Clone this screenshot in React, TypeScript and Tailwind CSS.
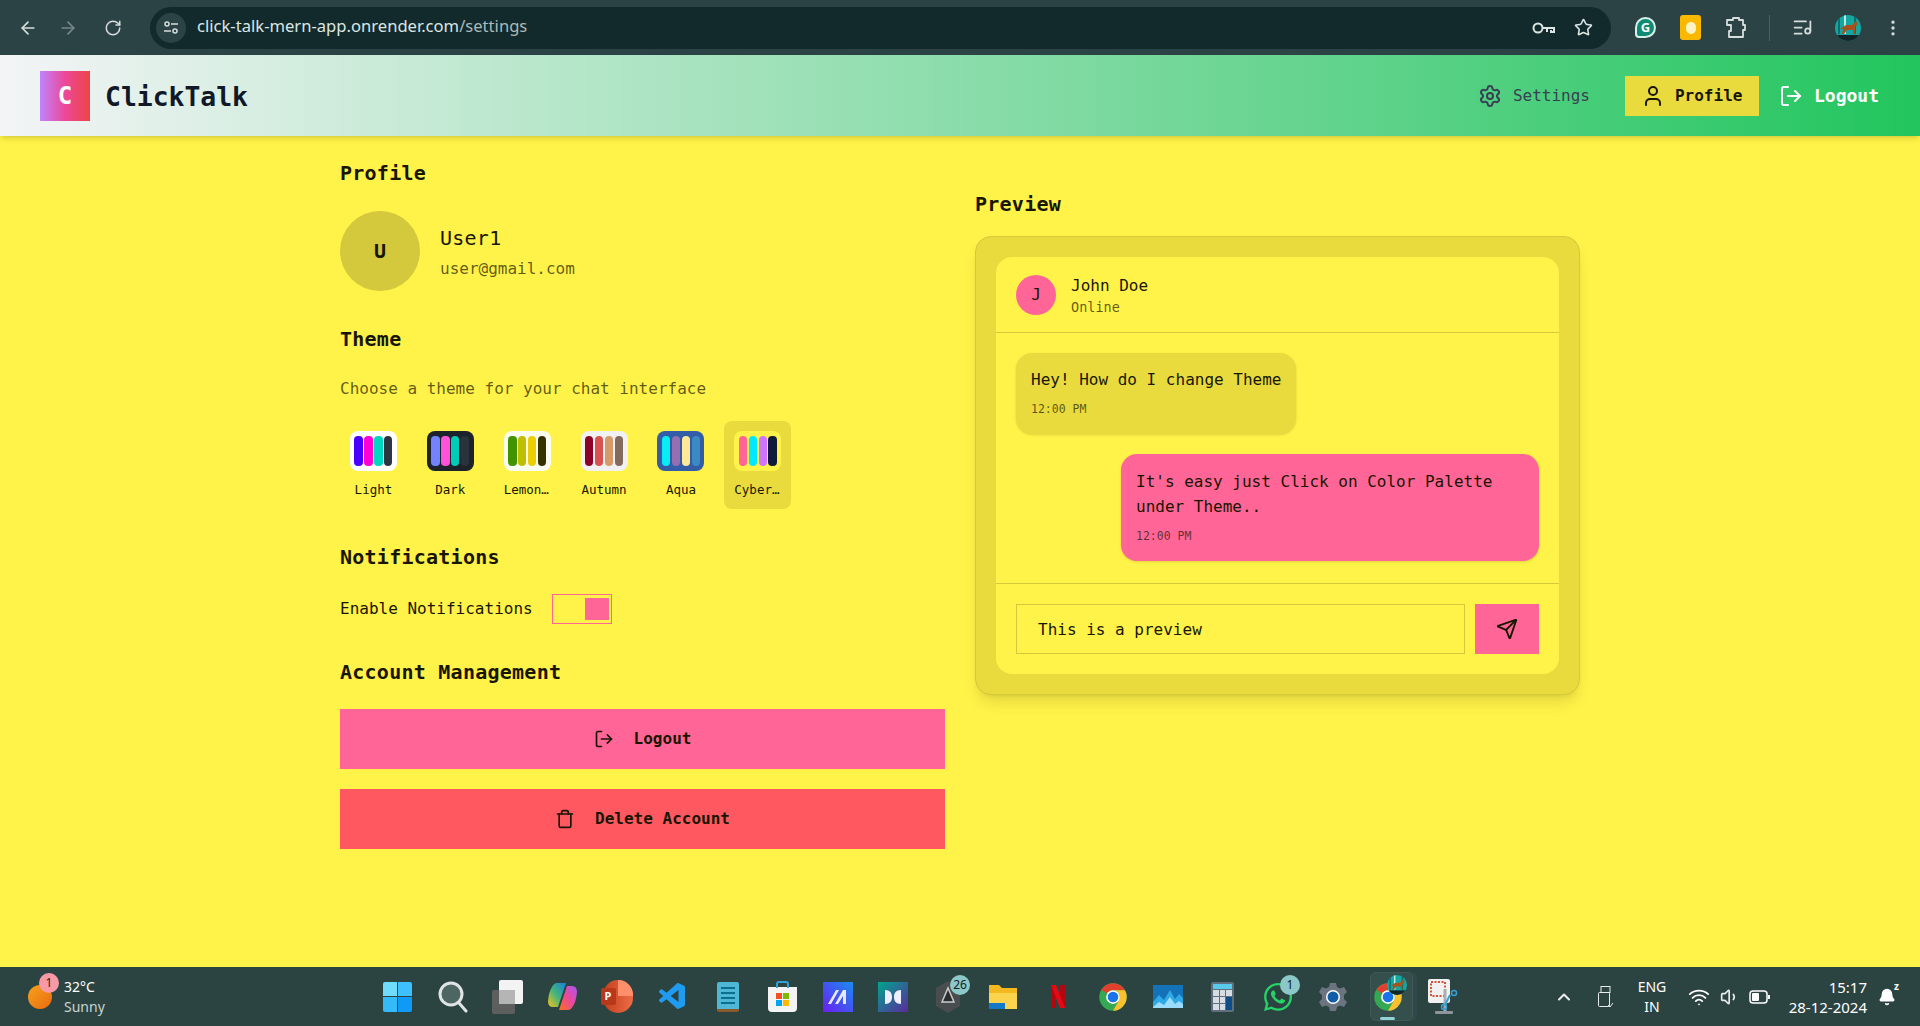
import React from "react";
import { ArrowLeft, ArrowRight, RotateCw, Star, ListMusic, MoreVertical, Settings, User, LogOut, Trash, Send, ChevronUp, Wifi, Volume1, Bell } from "lucide-react";
import { FaWhatsapp } from "react-icons/fa";
import { VscVscode } from "react-icons/vsc";

const mono = "font-['DejaVu_Sans_Mono','Liberation_Mono',monospace]";

const themes = [
  { name: "Light", bg: "bg-white", bars: ["bg-[#4a00ff]", "bg-[#ff00d3]", "bg-[#00d7c0]", "bg-[#2b3440]"] },
  { name: "Dark", bg: "bg-[#1d232a]", bars: ["bg-[#7582ff]", "bg-[#ff52d9]", "bg-[#00cdb7]", "bg-[#2a323c]"] },
  { name: "Lemonade", bg: "bg-[#f8fdef]", bars: ["bg-[#419400]", "bg-[#bfbf00]", "bg-[#ebcf00]", "bg-[#343300]"] },
  { name: "Autumn", bg: "bg-[#f1f1f1]", bars: ["bg-[#8c0327]", "bg-[#d85251]", "bg-[#d59b6a]", "bg-[#826a5c]"] },
  { name: "Aqua", bg: "bg-[#345da7]", bars: ["bg-[#09ecf3]", "bg-[#966fb3]", "bg-[#ffe999]", "bg-[#3b8ac4]"] },
  { name: "Cyberpunk", bg: "bg-[#fff248]", bars: ["bg-[#ff6596]", "bg-[#00e8ff]", "bg-[#ce74ff]", "bg-[#111a3b]"], active: true },
];

function ChromeLogo({ size = 30 }: { size?: number }) {
  return (
    <svg width={size} height={size} viewBox="0 0 48 48">
      <circle cx="24" cy="24" r="22" fill="#34a853" />
      <path d="M24 2A22 22 0 0 1 43 13H24A11 11 0 0 0 14.500 18.500L5.500 12.500A22 22 0 0 1 24 2Z" fill="#e2402f" />
      <path d="M43 13A22 22 0 0 1 24 46L33.500 29.500A11 11 0 0 0 24 13Z" fill="#fbc02d" />
      <circle cx="24" cy="24" r="11" fill="#fff" />
      <circle cx="24" cy="24" r="8.500" fill="#1a73e8" />
    </svg>
  );
}

function HorseAvatar({ size = 26 }: { size?: number }) {
  return (
    <svg width={size} height={size} viewBox="0 0 26 26">
      <defs>
        <clipPath id={`c${size}`}><circle cx="13" cy="13" r="13" /></clipPath>
      </defs>
      <g clipPath={`url(#c${size})`}>
        <rect width="26" height="26" fill="#14a6a0" />
        <rect x="3" width="2" height="19" fill="#0b6f72" />
        <rect x="9" width="2" height="19" fill="#bfe7e6" />
        <rect x="19" width="2" height="19" fill="#0b6f72" />
        <path d="M5 14l6-4 6 0 4-4 2 3-3 3v7h-2v-4l-6 0-3 4H7l1-5z" fill="#a5521f" />
        <rect y="20" width="26" height="6" fill="#12262a" />
      </g>
    </svg>
  );
}

function Gear({ size = 30 }: { size?: number }) {
  return (
    <svg width={size} height={size} viewBox="0 0 30 30">
      <path d="M12 1h6l1 4 3 1.500 4-1.500 3 5-3 3v4l3 3-3 5-4-1.500L19 25l-1 4h-6l-1-4-3-1.500L4 25l-3-5 3-3v-4L1 10l3-5 4 1.500L11 5z" fill="#6b7480" />
      <circle cx="15" cy="15" r="7" fill="#fff" />
      <circle cx="15" cy="15" r="5.500" fill="#0f5ca8" />
    </svg>
  );
}

function Slot({ children, badge, className = "" }: { children: React.ReactNode; badge?: string; className?: string }) {
  return (
    <div className={`relative flex h-full w-[55px] items-center justify-center ${className}`}>
      {children}
      {badge && (
        <span className="absolute left-[30px] top-[8px] flex h-[20px] w-[20px] items-center justify-center rounded-full bg-[#8cc8c8] font-['Noto_Sans',sans-serif] text-[12px] text-[#10201f]">
          {badge}
        </span>
      )}
    </div>
  );
}

function Taskbar() {
  return (
    <div className="flex h-[59px] shrink-0 items-center bg-[#2c4441] font-['Noto_Sans',sans-serif] text-white">
      <div className="flex w-[370px] items-center pl-[28px]">
        <div className="relative h-[24px] w-[24px] rounded-full bg-[linear-gradient(135deg,#f7a21b,#e96a12)]">
          <span className="absolute left-[11px] top-[-12px] flex h-[20px] w-[20px] items-center justify-center rounded-full bg-[#f79aa6] text-[12px] text-[#222]">1</span>
        </div>
        <div className="ml-[12px] text-[14px] leading-[20px]">
          <div>32°C</div>
          <div className="text-[#c9d2d0]">Sunny</div>
        </div>
      </div>
      <div className="flex h-full">
        <Slot>
          <div className="grid h-[30px] w-[29px] grid-cols-2 gap-[1px]">
            <div className="rounded-tl-[2px] bg-[#6fdcfb]" /><div className="rounded-tr-[2px] bg-[#3dc0fb]" />
            <div className="rounded-bl-[2px] bg-[#35baf8]" /><div className="rounded-br-[2px] bg-[#0f9bf5]" />
          </div>
        </Slot>
        <Slot>
          <svg width="30" height="36" viewBox="0 0 30 36" fill="none">
            <circle cx="13" cy="15" r="11" fill="#4e6663" stroke="#dfe5e4" strokeWidth="3" />
            <path d="M21 24l7 8" stroke="#dfe5e4" strokeWidth="3" strokeLinecap="round" />
          </svg>
        </Slot>
        <Slot>
          <svg width="31" height="34" viewBox="0 0 31 34">
            <rect y="10" width="23" height="24" rx="2" fill="#5d5f5f" />
            <rect x="7" y="0" width="24" height="24" rx="2" fill="#f3f3f3" />
            <rect x="7" y="10" width="16" height="14" fill="#b5b5b5" />
          </svg>
        </Slot>
        <Slot>
          <svg width="29" height="31" viewBox="0 0 29 31">
            <defs>
              <linearGradient id="cp1" x1="0" y1="1" x2="1" y2="0"><stop offset="0" stopColor="#f5c518" /><stop offset=".5" stopColor="#3fb37f" /><stop offset="1" stopColor="#1a7fe0" /></linearGradient>
              <linearGradient id="cp2" x1="0" y1="1" x2="1" y2="0"><stop offset="0" stopColor="#f97316" /><stop offset=".5" stopColor="#ec4899" /><stop offset="1" stopColor="#a855f7" /></linearGradient>
            </defs>
            <path d="M9 2h9l-8 24H5Q0 26 0 20Q1 10 4 6Q6 2 9 2Z" fill="url(#cp1)" />
            <path d="M20 29h-9l8-24h5q5 0 5 6q-1 10-4 14q-2 4-5 4Z" fill="url(#cp2)" />
          </svg>
        </Slot>
        <Slot>
          <div className="relative h-[33px] w-[30px] rounded-full bg-[linear-gradient(90deg,#c43e1c,#ed6c47)]">
            <div className="absolute right-0 top-0 h-[16px] w-[15px] rounded-tr-full bg-[#ff8f6b]" />
            <span className="absolute left-[-2px] top-[8px] flex h-[17px] w-[15px] items-center justify-center rounded-[2px] bg-[#b7381a] text-[11px] font-bold text-white">P</span>
          </div>
        </Slot>
        <Slot><VscVscode size={32} className="text-[#1f9cf0]" /></Slot>
        <Slot>
          <div className="flex h-[30px] w-[22px] flex-col justify-center gap-[3px] rounded-[2px] border-b-[3px] border-[#8a5a2b] bg-[#4fb7d6] px-[4px]">
            <div className="h-[2px] bg-[#0d6f8f]" /><div className="h-[2px] bg-[#0d6f8f]" /><div className="h-[2px] bg-[#0d6f8f]" /><div className="h-[2px] bg-[#0d6f8f]" />
          </div>
        </Slot>
        <Slot>
          <div className="relative h-[25px] w-[29px] translate-y-[3px] rounded-b-[4px] bg-[#f4f4f4]">
            <div className="absolute left-[8px] top-[-6px] h-[7px] w-[13px] rounded-t-[3px] border-2 border-b-0 border-[#35a0d8]" />
            <div className="absolute left-[8px] top-[6px] grid h-[13px] w-[13px] grid-cols-2 gap-[1px]">
              <div className="bg-[#f25022]" /><div className="bg-[#7fba00]" /><div className="bg-[#00a4ef]" /><div className="bg-[#ffb900]" />
            </div>
          </div>
        </Slot>
        <Slot>
          <svg width="30" height="30" viewBox="0 0 30 30">
            <defs><linearGradient id="ma" x1="0" y1="1" x2="1" y2="0"><stop offset="0" stopColor="#6a1ff2" /><stop offset="1" stopColor="#1a8cf0" /></linearGradient></defs>
            <rect width="30" height="30" fill="url(#ma)" />
            <path d="M5 22L13 8h3L8 22zM12 22L20 8h3v14h-3v-8l-5 8z" fill="#e8e8ff" />
          </svg>
        </Slot>
        <Slot>
          <svg width="30" height="30" viewBox="0 0 30 30">
            <defs><linearGradient id="dl" x1="0" y1="0" x2="1" y2="1"><stop offset="0" stopColor="#00a58c" /><stop offset="1" stopColor="#5b2a9e" /></linearGradient></defs>
            <rect width="30" height="30" fill="url(#dl)" />
            <path d="M7 8c5 0 7 3 7 7s-2 7-7 7zM23 8c-5 0-7 3-7 7s2 7 7 7z" fill="#eef" />
          </svg>
        </Slot>
        <Slot badge="26">
          <svg width="28" height="34" viewBox="0 0 28 34">
            <path d="M14 1l12 7v18l-12 7-12-7V8z" fill="#4a4d50" />
            <path d="M14 8l6 14H8z" fill="#2a2c2e" stroke="#c9cccc" strokeWidth="1.500" />
          </svg>
        </Slot>
        <Slot>
          <svg width="30" height="28" viewBox="0 0 30 28">
            <path d="M1 2h10l3 3h15v21H1z" fill="#f5b81f" />
            <path d="M1 10h28v16H1z" fill="#fcd34d" />
            <rect x="1" y="20" width="16" height="6" fill="#1479c9" />
          </svg>
        </Slot>
        <Slot>
          <svg width="14" height="23" viewBox="0 0 14 23">
            <path d="M0 0h5v23l-5 0zM9 0h5v23H9z" fill="#b20710" />
            <path d="M0 0h5l9 23H9z" fill="#e50914" />
          </svg>
        </Slot>
        <Slot><ChromeLogo /></Slot>
        <Slot>
          <svg width="30" height="23" viewBox="0 0 30 23">
            <rect width="30" height="23" fill="#1473b8" />
            <path d="M0 17l6-7 5 5 6-10 5 9 4-5 4 4v10H0z" fill="#2fa8e6" />
            <path d="M0 22l6-5 5 3 6-8 5 7 4-3 4 3v4H0z" fill="#9adcfb" />
          </svg>
        </Slot>
        <Slot>
          <div className="flex h-[30px] w-[23px] flex-col gap-[1px] rounded-[2px] bg-[#5f6f7d] p-[2px]">
            <div className="h-[5px] bg-[#58c9ea]" />
            <div className="grid flex-1 grid-cols-3 grid-rows-3 gap-[1px]">
              <div className="bg-[#d7dde2]" /><div className="bg-[#d7dde2]" /><div className="bg-[#d7dde2]" />
              <div className="bg-[#d7dde2]" /><div className="bg-[#d7dde2]" /><div className="row-span-2 bg-[#0f4c8a]" />
              <div className="bg-[#d7dde2]" /><div className="bg-[#d7dde2]" />
            </div>
          </div>
        </Slot>
        <Slot badge="1"><FaWhatsapp size={32} className="text-[#25d366]" /></Slot>
        <Slot><Gear /></Slot>
        <Slot>
          <div className="absolute left-[10px] top-[5px] h-[49px] w-[43px] rounded-[6px] border border-[#3f5855] bg-[#35504c] shadow-[4px_0_0_#31494a]" />
          <div className="relative"><ChromeLogo /></div>
          <div className="absolute left-[27px] top-[8px]"><HorseAvatar size={20} /></div>
          <div className="absolute bottom-[6px] left-[20px] h-[3px] w-[15px] rounded-full bg-[#92d3d3]" />
        </Slot>
        <Slot>
          <svg width="30" height="36" viewBox="0 0 30 36">
            <rect width="22" height="24" rx="2" fill="#f1f1f1" />
            <rect x="3" y="3" width="14" height="14" fill="none" stroke="#d4543c" strokeWidth="2" strokeDasharray="2 1.500" />
            <path d="M17 10v22" stroke="#a7b0b3" strokeWidth="3" />
            <path d="M22 16l-5 10" stroke="#35a0d8" strokeWidth="2" />
            <circle cx="26" cy="14" r="2.500" fill="none" stroke="#35a0d8" strokeWidth="1.500" />
            <circle cx="16" cy="28" r="2.500" fill="none" stroke="#35a0d8" strokeWidth="1.500" />
            <rect x="7" y="32" width="18" height="3" rx="1" fill="#8c9599" />
          </svg>
        </Slot>
      </div>
      <div className="flex h-full flex-1 items-center pl-[84px]">
        <ChevronUp size={20} strokeWidth={2.5} className="text-[#e7ecec]" />
        <svg className="ml-[24px]" width="16" height="22" viewBox="0 0 16 22" fill="none" stroke="#e7ecec" strokeWidth="1">
          <rect x="3" y=".5" width="9" height="6" />
          <rect x=".5" y="6.500" width="11" height="14" rx="1" />
          <path d="M10 19l2 2 3-4" />
        </svg>
        <div className="ml-[17px] w-[42px] text-center text-[14px] leading-[20px]"><div>ENG</div><div>IN</div></div>
        <Wifi size={22} className="ml-[15px] text-white" />
        <Volume1 size={20} className="ml-[10px] text-[#e7ecec]" />
        <svg className="ml-[9px]" width="21" height="14" viewBox="0 0 21 14" fill="none">
          <rect x="1" y="1" width="17" height="12" rx="3" stroke="#fff" strokeWidth="1.500" />
          <rect x="3" y="3" width="7" height="8" rx="1" fill="#fff" />
          <rect x="19" y="5" width="2" height="4" fill="#fff" />
        </svg>
        <div className="ml-[9px] w-[88px] whitespace-nowrap text-right text-[15px] leading-[20px]"><div>15:17</div><div>28-12-2024</div></div>
        <div className="relative ml-[11px]">
          <Bell size={18} className="text-white" fill="white" />
          <span className="absolute right-[-3px] top-[-7px] text-[10px] font-bold leading-[10px] text-white">z</span>
        </div>
      </div>
    </div>
  );
}

function BrowserBar() {
  return (
    <div className="flex h-[55px] shrink-0 items-center bg-[#2c4345] font-['Noto_Sans',sans-serif] text-[#d6dddd]">
      <div className="flex w-[150px] items-center">
        <div className="flex w-[56px] justify-center"><ArrowLeft size={20} /></div>
        <div className="-ml-[11px] flex w-[45px] justify-center text-[#75888a]"><ArrowRight size={20} /></div>
        <div className="flex w-[45px] justify-center"><RotateCw size={18} /></div>
      </div>
      <div className="flex h-[42px] w-[1461px] items-center rounded-full bg-[#122a2c] pl-[6px] pr-[18px]">
        <div className="flex h-[30px] w-[30px] items-center justify-center rounded-full bg-[#2c4345]">
          <svg width="16" height="16" viewBox="0 0 16 16" fill="none" stroke="#d6dddd" strokeWidth="1.500">
            <circle cx="4" cy="4" r="2" /><path d="M8 4h7M1 11h7" /><circle cx="12" cy="11" r="2" />
          </svg>
        </div>
        <div className="ml-[11px] flex-1 pb-[2px] text-[16.600px] text-[#dbe6e4]">click-talk-mern-app.onrender.com<span className="text-[#a9b9b8]">/settings</span></div>
        <svg className="mr-[19px]" width="23" height="16" viewBox="0 0 23 16" fill="none" stroke="#dbe6e4" strokeWidth="2">
          <circle cx="6" cy="8" r="4.500" />
          <path d="M10.500 8H22v4h-3v-2M15 8v4" />
        </svg>
        <Star size={19} className="text-[#dbe6e4]" />
      </div>
      <div className="flex flex-1 items-center">
        <div className="ml-[24px] flex h-[21px] w-[21px] items-center justify-center rounded-[50%_50%_50%_4px] border-2 border-[#d8f0ea] bg-[#0f8a74] text-[13px] font-bold text-white">G</div>
        <div className="ml-[24px] flex h-[25px] w-[21px] items-center justify-center rounded-[3px] bg-[#fbb800]">
          <div className="h-[12px] w-[10px] rounded-full bg-[#fff3c4]" />
        </div>
        <svg className="ml-[24px]" width="21" height="24" viewBox="0 0 21 24" fill="none" stroke="#d6dddd" strokeWidth="1.800" strokeLinejoin="round">
          <path d="M2 4h6V2h6v2h4v5h2v5h-2v7H4v-6h2V9H2z" />
        </svg>
        <div className="ml-[23px] h-[26px] w-px bg-[#4a6062]" />
        <ListMusic size={21} className="ml-[22px]" />
        <div className="ml-[22px]"><HorseAvatar size={26} /></div>
        <MoreVertical size={20} className="ml-[22px]" />
      </div>
    </div>
  );
}

function Navbar() {
  return (
    <div className="z-10 flex h-[81px] shrink-0 items-center justify-between bg-[linear-gradient(to_right,#f3f4f6,#22c55e)] pl-[40px] pr-[41px] shadow-md">
      <div className="flex items-center gap-[15px]">
        <div className="flex h-[50px] w-[50px] items-center justify-center bg-[linear-gradient(to_right,#c084fc,#ec4899,#ef4444)] text-[24px] font-bold text-white">C</div>
        <div className="pt-[2px] text-[26.400px] font-bold text-[#111827]">ClickTalk</div>
      </div>
      <div className="flex items-center">
        <div className="flex items-center gap-[11px] text-[16px] text-[#374151]">
          <Settings size={24} />
          <span>Settings</span>
        </div>
        <div className="ml-[35px] flex h-[40px] w-[134px] items-center gap-[10px] bg-[#e9db3e] pl-[16px] text-[16px] font-bold text-[#181600]">
          <User size={24} />
          <span>Profile</span>
        </div>
        <div className="ml-[20px] flex items-center gap-[11px] text-[18px] font-semibold text-white">
          <LogOut size={24} />
          <span>Logout</span>
        </div>
      </div>
    </div>
  );
}

const h2 = "text-[20px] font-bold leading-[28px] tracking-[0.25px]";

function LeftColumn() {
  return (
    <div className="flex flex-col pt-[23px]">
      <h2 className={h2}>Profile</h2>
      <div className="mt-[24px] flex items-start gap-[20px]">
        <div className="flex h-[80px] w-[80px] items-center justify-center rounded-full bg-[#d4c83c] text-[20px] font-bold">U</div>
        <div className="mt-[13px]">
          <div className="text-[20px] font-medium leading-[28px] tracking-[0.25px]">User1</div>
          <div className="mt-[5px] text-[16px] leading-[24px] text-[#181600]/70">user@gmail.com</div>
        </div>
      </div>
      <h2 className={`mt-[34px] ${h2}`}>Theme</h2>
      <p className="mt-[24px] text-[16px] leading-[24px] text-[#181600]/70">Choose a theme for your chat interface</p>
      <div className="mt-[20px] flex gap-[10px]">
        {themes.map((t) => (
          <div key={t.name} className={`flex h-[88px] w-[66.880px] flex-col items-center rounded-[8px] px-[10px] pt-[10px] ${t.active ? "bg-[#e9db3e]" : ""}`}>
            <div className={`grid h-[40px] w-[47px] shrink-0 grid-cols-4 gap-[1.500px] rounded-[8px] px-[4.500px] py-[5px] ${t.bg}`}>
              {t.bars.map((b) => <div key={b} className={`rounded-[4px] ${b}`} />)}
            </div>
            <div className="mt-[11px] w-[47px] truncate text-center text-[12.500px] leading-[16px]">{t.name}</div>
          </div>
        ))}
      </div>
      <h2 className={`mt-[34px] ${h2}`}>Notifications</h2>
      <div className="mt-[23px] flex items-center gap-[19px]">
        <span className="text-[16px] leading-[24px]">Enable Notifications</span>
        <div className="flex h-[30px] w-[60px] items-center justify-end border border-[#ff6596] pr-[2px]">
          <div className="h-[22px] w-[24px] bg-[#ff6596]" />
        </div>
      </div>
      <h2 className={`mt-[34px] ${h2}`}>Account Management</h2>
      <button className="mt-[23px] flex h-[60px] w-full items-center justify-center gap-[20px] bg-[#ff6596] text-[16px] font-bold">
        <LogOut size={20} /> <span>Logout</span>
      </button>
      <button className="mt-[20px] flex h-[60px] w-full items-center justify-center gap-[20px] bg-[#ff5861] text-[16px] font-bold">
        <Trash size={20} /> <span>Delete Account</span>
      </button>
    </div>
  );
}

function RightColumn() {
  return (
    <div className="flex flex-col pt-[54px]">
      <h2 className={h2}>Preview</h2>
      <div className="mt-[18px] rounded-[16px] border border-[#d4c83c] bg-[#e9db3e] p-[20px] shadow-lg">
        <div className="rounded-[16px] bg-[#fff248]">
          <div className="flex h-[76px] items-center gap-[15px] border-b border-[#d4c83c] px-[20px]">
            <div className="flex h-[40px] w-[40px] items-center justify-center rounded-full bg-[#ff6596] text-[16px] font-medium">J</div>
            <div>
              <div className="text-[16px] leading-[24px]">John Doe</div>
              <div className="text-[13.500px] leading-[18px] text-[#181600]/70">Online</div>
            </div>
          </div>
          <div className="flex flex-col gap-[20px] border-b border-[#d4c83c] px-[20px] pb-[22px] pt-[20px]">
            <div className="w-fit rounded-[16px] bg-[#e9db3e] px-[15px] pb-[17px] pt-[15px] shadow-sm">
              <p className="text-[16px] leading-[24px]">Hey! How do I change Theme</p>
              <p className="mt-[9px] text-[11.500px] leading-[16px] text-[#181600]/70">12:00 PM</p>
            </div>
            <div className="ml-auto w-[418px] rounded-[16px] bg-[#ff6596] px-[15px] pb-[17px] pt-[15px] shadow-sm">
              <p className="text-[16px] leading-[25px]">It's easy just Click on Color Palette under Theme..</p>
              <p className="mt-[9px] text-[11.500px] leading-[16px] text-[#181600]/70">12:00 PM</p>
            </div>
          </div>
          <div className="flex gap-[10px] p-[20px]">
            <div className="flex h-[50px] flex-1 items-center border border-[#d4c83c] pl-[21px] pt-[1px] text-[16px]">This is a preview</div>
            <div className="flex h-[50px] w-[64px] items-center justify-center bg-[#ff6596]"><Send size={22} /></div>
          </div>
        </div>
      </div>
    </div>
  );
}

export default function App() {
  return (
    <div className={`flex h-screen flex-col overflow-hidden bg-[#fff248] text-[#181600] ${mono}`}>
      <BrowserBar />
      <Navbar />
      <div className="min-h-0 flex-1">
        <div className="mx-auto grid w-[1240px] grid-cols-2 gap-[30px]">
          <LeftColumn />
          <RightColumn />
        </div>
      </div>
      <Taskbar />
    </div>
  );
}
